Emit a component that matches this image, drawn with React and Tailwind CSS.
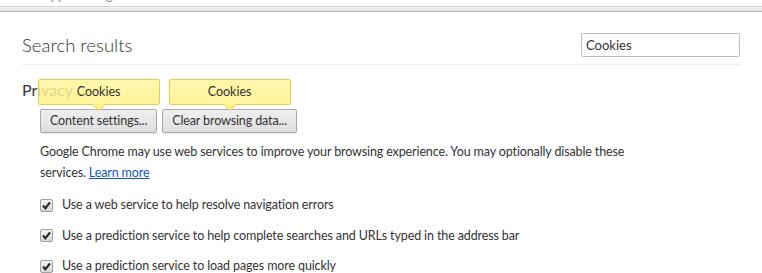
import React from 'react';

const FONT = { fontFamily: '"Segoe UI", Lato, "Noto Sans", sans-serif' };

function Check({ label }) {
  return (
    <div className="flex items-center h-[30.4px]">
      <span className="w-[13px] h-[13px] rounded-[2px] border border-[#a0a0a0] bg-gradient-to-b from-[#f2f2f2] to-[#d8d8d8] flex items-center justify-center shrink-0">
        <svg width="11" height="11" viewBox="0 0 11 11">
          <path d="M2 5.6 L4.4 8.2 L9 2.4" fill="none" stroke="#2a2a2a" strokeWidth="2.2" />
        </svg>
      </span>
      <span className="ml-[9px] text-[12.5px] tracking-[-0.12px] text-[#333]">{label}</span>
    </div>
  );
}

function BubbleButton({ label }) {
  return (
    <div className="relative">
      {/* yellow search bubble, slightly see-through like Chrome's */}
      <div className="absolute left-1/2 -translate-x-1/2 bottom-[28px] w-[122px] h-[26px] rounded-[2px] border border-[#e3cd4f] bg-gradient-to-b from-[#fff69d]/85 to-[#fff08a]/85 flex items-center justify-center text-[12.5px] text-[#333]">
        Cookies
        <span className="absolute left-1/2 -translate-x-1/2 top-full w-0 h-0 border-l-[7px] border-r-[7px] border-t-[7px] border-l-transparent border-r-transparent border-t-[#e3cd4f]" />
        <span className="absolute left-1/2 -translate-x-1/2 top-full w-0 h-0 border-l-[6px] border-r-[6px] border-t-[6px] border-l-transparent border-r-transparent border-t-[#fff08a]" />
      </div>
      <button className="h-[24px] px-[9px] rounded-[2px] border border-[#a9a9a9] bg-gradient-to-b from-[#efefef] to-[#dedede] text-[12.5px] tracking-[-0.12px] text-[#333] shadow-[0_1px_0_rgba(0,0,0,0.08)]">
        {label}
      </button>
    </div>
  );
}

export default function App() {
  return (
    <div className="w-[762px] h-[273px] bg-white overflow-hidden" style={FONT}>
      <div className="h-[6px] overflow-hidden relative">
        <span className="absolute left-[42px] -top-[14px] text-[13px] text-[#888]">Apps settings</span>
      </div>
      <div className="h-[6px] border-t border-[#d6d6d6] border-b border-b-[#b3b3b3] bg-gradient-to-b from-[#f4f4f4] to-[#e4e4e4]" />

      <div className="px-[22px]">
        <header className="flex items-center justify-between pt-[21px] pb-[7px] border-b border-[#eeeeee]">
          <h1 className="text-[18.5px] font-light text-[#333] leading-none pt-[1px]">Search results</h1>
          <input
            readOnly
            value="Cookies"
            className="w-[159px] h-[24px] border border-[#bfbfbf] rounded-[2px] px-[4px] text-[13px] text-[#333] outline-none"
            style={FONT}
          />
        </header>

        <section className="pt-[15px]">
          <h3 className="text-[16px] text-[#333] leading-[20px]">Privacy</h3>
          <div className="pl-[18px]">
            <div className="flex gap-[5px] mt-[7px]">
              <BubbleButton label="Content settings..." />
              <BubbleButton label="Clear browsing data..." />
            </div>
            <p className="text-[12.5px] tracking-[-0.12px] text-[#333] leading-[21px] mt-[8px]">
              Google Chrome may use web services to improve your browsing experience. You may optionally disable these
              <br />
              services. <a className="text-[#1155cc] underline">Learn more</a>
            </p>
            <div className="mt-[7px]">
              <Check label="Use a web service to help resolve navigation errors" />
              <Check label="Use a prediction service to help complete searches and URLs typed in the address bar" />
              <Check label="Use a prediction service to load pages more quickly" />
            </div>
          </div>
        </section>
      </div>
    </div>
  );
}
